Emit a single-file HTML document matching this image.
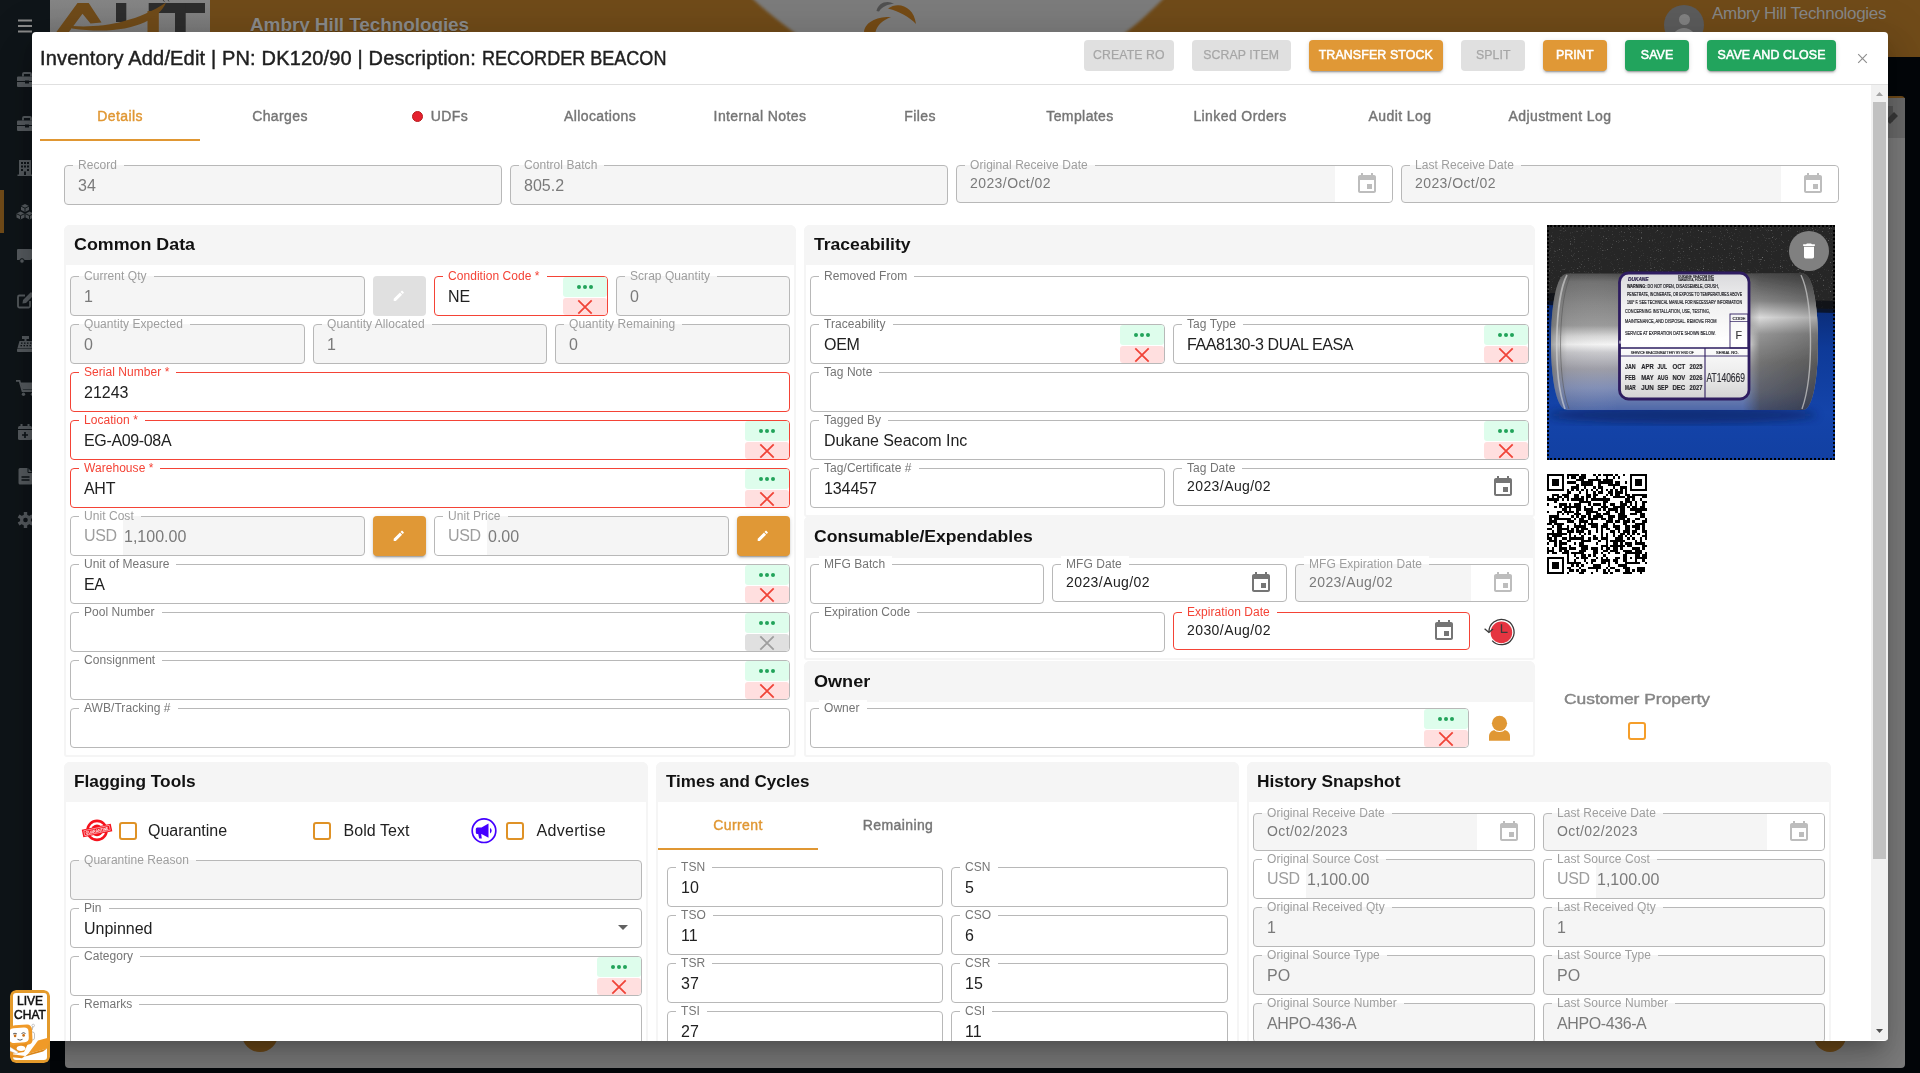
<!DOCTYPE html>
<html lang="en"><head><meta charset="utf-8"><title>Inventory Add/Edit</title>
<style>
*{box-sizing:border-box;margin:0;padding:0}
html,body{width:1920px;height:1073px;overflow:hidden;background:#050709}
body{font-family:"Liberation Sans",sans-serif;position:relative}
.abs{position:absolute}
#bg{position:absolute;left:0;top:0;width:1920px;height:1073px;overflow:hidden;background:#04070a}
#dlg{position:absolute;left:32px;top:32px;width:1856px;height:1008.5px;background:#fff;border-radius:4px;overflow:hidden}
#dlgsh{position:absolute;left:32px;top:32px;width:1856px;height:1008.5px;border-radius:4px;box-shadow:0 11px 15px -7px rgba(0,0,0,.2),0 24px 38px 3px rgba(0,0,0,.14),0 9px 46px 8px rgba(0,0,0,.12)}
#c{position:absolute;left:-32px;top:-32px;width:1920px;height:1073px;will-change:transform}
.title{position:absolute;left:40px;top:46px;font-size:20px;line-height:24px;color:#1f1f1f;font-weight:normal;-webkit-text-stroke:.45px #1f1f1f;letter-spacing:.16px;white-space:nowrap}
.btn{position:absolute;top:40px;height:30.5px;border-radius:4px;font-size:13px;font-weight:normal;-webkit-text-stroke:.55px;line-height:30px;text-align:center;white-space:nowrap;letter-spacing:.1px}
.btn span{display:inline-block;transform:scaleX(.955)}
.btn.o{background:#e09836;color:#fff;box-shadow:0 3px 1px -2px rgba(0,0,0,.2),0 2px 2px 0 rgba(0,0,0,.14),0 1px 5px 0 rgba(0,0,0,.12)}
.btn.g{background:#22a45d;color:#fff;box-shadow:0 3px 1px -2px rgba(0,0,0,.2),0 2px 2px 0 rgba(0,0,0,.14),0 1px 5px 0 rgba(0,0,0,.12)}
.btn.d{background:#e0e0e0;color:#a6a6a6;-webkit-text-stroke:.25px;letter-spacing:.1px}
.btn.d span{transform:scaleX(.945)}
.tab{position:absolute;height:48px;width:160px;text-align:center;font-size:14px;line-height:46px;color:#757575;font-weight:normal;-webkit-text-stroke:.4px;letter-spacing:.4px;white-space:nowrap}
.tab.a{color:#e09733}
.tab.a:after{content:"";position:absolute;left:0;right:0;bottom:0;height:2px;background:#e09733}
.f{position:absolute;border:1px solid #b8b8b8;border-radius:4px;background:#fff}
.f.dis{background:#f5f5f5}
.f.red{border-color:#f44336}
.f .l{position:absolute;left:8px;top:-9px;height:16px;padding:0 7px 0 5px;font-size:12px;line-height:16px;color:#757575;white-space:nowrap;background:#fff;letter-spacing:.05px}
.f.dis .l{color:#9e9e9e;background:linear-gradient(#fff 0,#fff 8px,#f5f5f5 8px)}
.f.dis.inpanel .l{background:linear-gradient(#fff 0,#fff 8px,#f5f5f5 8px)}
.f.red .l{color:#f44336}
.f .v{position:absolute;left:13px;top:8.7px;font-size:16px;line-height:22px;color:#212121;white-space:nowrap}
.f.dis .v{color:#7a7a7a}
.f.date .v{font-size:14px;top:7px;line-height:20px;letter-spacing:.42px}
.f .usd{position:absolute;left:0;top:0;bottom:0;background:#fff;border-radius:4px 0 0 4px;font-size:16px;line-height:38px;padding-left:13px;color:#9e9e9e;letter-spacing:-.4px}
.f .icw{position:absolute;right:0;top:0;bottom:0;background:#fff;border-radius:0 4px 4px 0}
.gb{position:absolute;right:0;top:0;width:44px;height:20px;background:#defdec;border-radius:3px}
.gb i{position:absolute;top:8px;width:4px;height:4px;border-radius:50%;background:#22a35a}
.rb{position:absolute;right:0;top:21px;width:44px;bottom:0;background:#ffdfdf;border-radius:3px 3px 4px 3px;overflow:hidden}
.rb.gray{background:#e0e0e0}
.pan{position:absolute;background:#fff;border:2px solid #f5f5f5;border-radius:6px 6px 3px 3px}
.ph{position:absolute;background:#f5f5f5;border-radius:6px 6px 0 0}
.pt{position:absolute;font-size:16.5px;line-height:20px;font-weight:bold;color:#111;white-space:nowrap;letter-spacing:0;transform-origin:0 50%}
.cb{position:absolute;width:18px;height:18px;border:2px solid #df9226;border-radius:3px;background:#fff}
.cl{position:absolute;font-size:16px;line-height:20px;color:#212121;white-space:nowrap}
.pbtn{position:absolute;width:53px;height:40px;border-radius:4px;background:#e09836;box-shadow:0 3px 1px -2px rgba(0,0,0,.2),0 2px 2px 0 rgba(0,0,0,.14),0 1px 5px 0 rgba(0,0,0,.12)}
.pbtn.d{background:#e0e0e0;box-shadow:none}
.pbtn svg{position:absolute;left:19.4px;top:13.2px}
svg{display:block}
</style></head>
<body>
<div id="bg">
<div class="abs" style="left:50px;top:0;width:1870px;height:57px;background:#704b19"></div>
<svg class="abs" style="left:0;top:0" width="1920" height="56" viewBox="0 0 1920 56">
<defs><filter id="bl"><feGaussianBlur stdDeviation="1.500"/></filter></defs>
<path filter="url(#bl)" d="M750 -4 C 764 10, 780 22, 799 36 L 1121 36 C 1140 22, 1152 10, 1166 -4 Z" fill="#7c7c7c"/>
<path d="M864 32 C 865 22, 877 16.500, 891 17 C 883 20, 877 25, 875.500 32 Z" fill="#754b15"/>
<path d="M888 8.500 C 898 1, 914 6, 916 24 C 909 16.500, 900 12, 888 8.500 Z" fill="#754b15"/>
<path d="M876.500 11 C 878 2.500, 888 -0.500, 894 4 C 888 4, 882 6.500, 879 11.500 Z" fill="#505050"/>
</svg>
<div class="abs" style="left:50px;top:0;width:160px;height:56px;background:linear-gradient(#868686,#787878 60%);overflow:hidden">
<svg width="160" height="56" viewBox="0 0 160 56">
<rect x="66" y="3" width="10.300" height="19" fill="#2d2d2d"/>
<rect x="98.700" y="3" width="56.300" height="10" fill="#2d2d2d"/><rect x="125" y="3" width="10.700" height="30" fill="#2d2d2d"/>
<path d="M6 32.500 L27.500 3 L38.700 3 L51.500 22.500 L40.500 23.500 L32.500 13.700 L18.500 32.500 Z" fill="#704b19"/>
<rect x="97.500" y="11" width="11.300" height="22" fill="#704b19"/>
<path d="M22 26 C 50 28, 85 23, 116 2.500 C 108 22, 75 36, 22 28.500 Z" fill="#704b19"/>
<path d="M113 0 l1.500 1.800 M118 0 l1 1.500" stroke="#333" stroke-width=".8"/>
</svg></div>
<div class="abs" style="left:250px;top:13px;font-size:19px;line-height:24px;color:#8c8c8c;font-weight:bold;letter-spacing:-.1px;white-space:nowrap;text-shadow:0 1px 1px rgba(0,0,0,.25)">Ambry Hill Technologies</div>
<div class="abs" style="left:1712px;top:3px;font-size:17px;line-height:22px;color:#878787;white-space:nowrap;letter-spacing:-.3px">Ambry Hill Technologies</div>
<div class="abs" style="left:1664px;top:5px;width:40px;height:40px;border-radius:50%;background:#5c5c5c;overflow:hidden"><div class="abs" style="left:14.500px;top:9px;width:11px;height:11px;border-radius:50%;background:#828282"></div><div class="abs" style="left:8px;top:23px;width:24px;height:24px;border-radius:50%;background:#828282"></div></div>
<div class="abs" style="left:65px;top:96px;width:1840px;height:972px;background:#7e7e7e;border-radius:4px;border-top:2px solid #704b19"></div>
<div class="abs" style="left:1868px;top:98px;width:37px;height:40px;background:#6c6c6c"></div>
<svg class="abs" style="left:1880px;top:104px" width="22" height="22" viewBox="0 0 22 22"><path d="M8 2 h5 v16 h-5z" fill="#565656"/><path d="M6 16 L14 8 L18 12 L10 20Z" fill="#3a3a3a"/></svg>
<div class="abs" style="left:242px;top:1016px;width:36px;height:36px;border-radius:50%;background:#704b19"></div>
<div class="abs" style="left:1814px;top:1020px;width:32px;height:32px;border-radius:50%;background:#704b19"></div>
<div class="abs" style="left:0;top:0;width:50px;height:1073px;background:#0f1519"></div>
<div class="abs" style="left:0;top:190px;width:4px;height:43px;background:#704b19"></div>
<svg class="abs" style="left:18px;top:19px" width="14" height="14" viewBox="0 0 14 14"><path d="M0 1.600h14M0 7h14M0 12.400h14" stroke="#8a8a8a" stroke-width="2"/></svg>
<svg class="abs" style="left:17px;top:72px;overflow:visible" width="22" height="17" viewBox="0 0 22 17"><path d="M1 4.500 h18 a1 1 0 0 1 1 1 V14 a1 1 0 0 1 -1 1 H1 a1 1 0 0 1 -1 -1 V5.500 a1 1 0 0 1 1 -1z" fill="#575c60"/><path d="M6 4.500 V2 a1 1 0 0 1 1 -1 h6 a1 1 0 0 1 1 1 V4.500" fill="none" stroke="#575c60" stroke-width="1.800"/><path d="M0 9.500 h20" stroke="#0f1519" stroke-width="1"/><rect x="8" y="8.500" width="4" height="3" fill="#0f1519"/></svg>
<svg class="abs" style="left:17px;top:116px;overflow:visible" width="22" height="17" viewBox="0 0 22 17"><path d="M1 4.500 h18 a1 1 0 0 1 1 1 V14 a1 1 0 0 1 -1 1 H1 a1 1 0 0 1 -1 -1 V5.500 a1 1 0 0 1 1 -1z" fill="#575c60"/><path d="M6 4.500 V2 a1 1 0 0 1 1 -1 h6 a1 1 0 0 1 1 1 V4.500" fill="none" stroke="#575c60" stroke-width="1.800"/><path d="M0 9.500 h20" stroke="#0f1519" stroke-width="1"/><rect x="8" y="8.500" width="4" height="3" fill="#0f1519"/></svg>
<svg class="abs" style="left:17px;top:160px;overflow:visible" width="22" height="17" viewBox="0 0 22 17"><rect x="2" y="0" width="12" height="15" fill="#575c60"/><rect x="0.500" y="14.500" width="15" height="1.500" fill="#575c60"/><g fill="#0f1519"><rect x="4" y="2" width="2" height="2"/><rect x="7" y="2" width="2" height="2"/><rect x="10" y="2" width="2" height="2"/><rect x="4" y="5.500" width="2" height="2"/><rect x="7" y="5.500" width="2" height="2"/><rect x="10" y="5.500" width="2" height="2"/><rect x="4" y="9" width="2" height="2"/><rect x="10" y="9" width="2" height="2"/><rect x="7" y="11.500" width="2" height="3.500"/></g></svg>
<svg class="abs" style="left:17px;top:204px;overflow:visible" width="22" height="17" viewBox="0 0 22 17"><path d="M8 0 l4 2 v4 l-4 2 l-4 -2 v-4z M3.500 7.500 l4 2 v4 l-4 2 l-4 -2 v-4z M12.500 7.500 l4 2 v4 l-4 2 l-4 -2 v-4z" fill="#575c60"/><path d="M4 2.200 l4 2 l4 -2 M8 4.200 v3.600 M-.5 9.700 l4 2 l4 -2 M3.500 11.700 v3.600 M8.500 9.700 l4 2 l4 -2 M12.500 11.700 v3.600" stroke="#0f1519" stroke-width=".9" fill="none"/></svg>
<svg class="abs" style="left:17px;top:248px;overflow:visible" width="22" height="17" viewBox="0 0 22 17"><path d="M1 1 h13 a1 1 0 0 1 1 1 V12 H0 V2 a1 1 0 0 1 1 -1z M15 5 h3 l3 3.500 V12 h-6z" fill="#575c60"/><circle cx="5" cy="13" r="2.300" fill="#575c60" stroke="#0f1519" stroke-width="1"/><circle cx="16.500" cy="13" r="2.300" fill="#575c60" stroke="#0f1519" stroke-width="1"/></svg>
<svg class="abs" style="left:17px;top:292px;overflow:visible" width="22" height="17" viewBox="0 0 22 17"><path d="M8 3.500 H2.500 a1.500 1.500 0 0 0 -1.500 1.500 V14 a1.500 1.500 0 0 0 1.500 1.500 H11.500 a1.500 1.500 0 0 0 1.500 -1.500 V9" fill="none" stroke="#575c60" stroke-width="1.800"/><path d="M6 8 L14 0 L17 3 L9 11 L5.500 11.500Z" fill="#575c60"/></svg>
<svg class="abs" style="left:17px;top:336px;overflow:visible" width="22" height="17" viewBox="0 0 22 17"><rect x="5" y="0" width="7" height="3" fill="#575c60"/><rect x="7.500" y="3" width="2" height="2" fill="#575c60"/><path d="M2.500 5 h13 l2 7 h-17z" fill="#575c60"/><rect x="0" y="12.500" width="18" height="3.500" rx=".8" fill="#575c60"/><g fill="#0f1519"><rect x="4" y="6.500" width="1.500" height="1.300"/><rect x="7" y="6.500" width="1.500" height="1.300"/><rect x="10" y="6.500" width="1.500" height="1.300"/><rect x="13" y="6.500" width="1.500" height="1.300"/><rect x="3.500" y="9" width="1.500" height="1.300"/><rect x="6.500" y="9" width="1.500" height="1.300"/><rect x="9.500" y="9" width="1.500" height="1.300"/><rect x="12.500" y="9" width="1.500" height="1.300"/></g></svg>
<svg class="abs" style="left:17px;top:380px;overflow:visible" width="22" height="17" viewBox="0 0 22 17"><path d="M-1 0.800 H2.500 L5.500 11 H17" fill="none" stroke="#575c60" stroke-width="1.800"/><path d="M3.500 2.500 H19 L17.500 9.500 H5.500Z" fill="#575c60"/><circle cx="6.500" cy="14.300" r="1.700" fill="#575c60"/><circle cx="15.500" cy="14.300" r="1.700" fill="#575c60"/></svg>
<svg class="abs" style="left:17px;top:424px;overflow:visible" width="22" height="17" viewBox="0 0 22 17"><rect x="1" y="2" width="14" height="14" rx="1.500" fill="#575c60"/><rect x="3.500" y="0" width="2" height="4" fill="#575c60"/><rect x="10.500" y="0" width="2" height="4" fill="#575c60"/><rect x="1" y="5" width="14" height="1" fill="#0f1519"/><path d="M8 8 v6 M5 11 h6" stroke="#0f1519" stroke-width="1.700"/></svg>
<svg class="abs" style="left:17px;top:468px;overflow:visible" width="22" height="17" viewBox="0 0 22 17"><path d="M3 0 H11 L15.500 4.500 V15 a1.500 1.500 0 0 1 -1.500 1.500 H3 a1.500 1.500 0 0 1 -1.500 -1.500 V1.500 A1.500 1.500 0 0 1 3 0z" fill="#575c60"/><path d="M11 0 V4.500 H15.500" fill="none" stroke="#0f1519" stroke-width="1"/><path d="M4.500 9 h8 M4.500 12 h8" stroke="#0f1519" stroke-width="1.500"/></svg>
<svg class="abs" style="left:17px;top:512px;overflow:visible" width="22" height="17" viewBox="0 0 22 17"><g transform="translate(8.500 8)"><circle r="5.500" fill="#575c60"/><g fill="#575c60"><rect x="-1.700" y="-8" width="3.400" height="16"/><rect x="-1.700" y="-8" width="3.400" height="16" transform="rotate(60)"/><rect x="-1.700" y="-8" width="3.400" height="16" transform="rotate(120)"/></g><circle r="2.300" fill="#0f1519"/></g></svg>
<div class="abs" style="left:10px;top:990px;width:40px;height:73px;border-radius:6px;overflow:hidden;z-index:50">
<div class="abs" style="left:0;top:0;width:40px;height:73px;border-radius:6px;background:#fff;border:3px solid #e39a2b"></div>
<div class="abs" style="left:2px;top:4px;width:36px;text-align:center;font-size:12px;line-height:14px;color:#111;-webkit-text-stroke:.5px #111;letter-spacing:0">LIVE<br>CHAT</div>
<svg class="abs" style="left:-3px;top:33px" width="44" height="40" viewBox="0 0 44 40">
<path d="M25 7 l1 -4" stroke="#bbb" stroke-width="1.200"/><circle cx="26.200" cy="2.500" r="1.300" fill="#fff" stroke="#aaa" stroke-width=".6"/>
<rect x="23" y="9" width="4.500" height="8" rx="2" fill="#fff" stroke="#999" stroke-width=".6"/>
<path d="M3 7 C3 4, 5 2.500, 8 2.300 L20 1.500 C23 1.500, 24.800 3.500, 25 6.500 L25.500 17 C25.500 20, 23.500 21.500, 20.500 21.700 L8 22.500 C5 22.500, 3 20.500, 3 17.500Z" fill="#f09a28"/>
<path d="M2.500 9 C2.500 6.500, 4 5.300, 6.500 5.200 L17 4.500 C20 4.500, 21.500 6, 21.500 8.500 L21.800 15 C21.800 17.500, 20.300 19, 17.800 19.200 L7 20 C4 20, 2.500 18.500, 2.500 16Z" fill="#fff"/>
<path d="M6 11 q2 -1.600 4 0" stroke="#333" stroke-width=".8" fill="none"/><path d="M14.500 10.500 q2 -1.600 4 0" stroke="#333" stroke-width=".8" fill="none"/>
<ellipse cx="8.100" cy="12.800" rx="1.300" ry="1.500" fill="#c9701a"/><ellipse cx="16.600" cy="12.300" rx="1.300" ry="1.500" fill="#c9701a"/>
<path d="M10.500 16.300 q2.500 1.800 5 0" stroke="#444" stroke-width=".9" fill="none"/>
<path d="M3 22.500 L21 20.500 L17 29 L3 31Z" fill="#e88f1e"/>
<ellipse cx="14" cy="25.300" rx="4.300" ry="2.600" fill="#fff"/>
<path d="M21 31 L31 17.500 L44 14 L40 25.500 Z" fill="#f09a28"/><path d="M21 31 L40 25.500 L36 28.500 L18 33.500Z" fill="#d98518"/>
<path d="M21 30 L28.500 17.500 L27 17 L19.500 29Z" fill="#fff"/>
<path d="M3 24 L11 29 L10 31 L3 28Z" fill="#fff" stroke="#bbb" stroke-width=".4"/>
<path d="M3 31 L18 33 L15 35.300 L3 34Z" fill="#e88f1e"/>
</svg>
</div>
</div>
<div id="dlgsh"></div>
<div id="dlg"><div id="c">
<div class="title">Inventory Add/Edit | PN: DK120/90 | Description: <span style="display:inline-block;letter-spacing:0;transform:scaleX(.902);transform-origin:0 50%">RECORDER BEACON</span></div>
<div class="abs" style="left:32px;top:84px;width:1856px;height:1px;background:#e0e0e0"></div>
<div class="btn d" style="left:1084px;width:90px"><span>CREATE RO</span></div>
<div class="btn d" style="left:1192px;width:99px"><span>SCRAP ITEM</span></div>
<div class="btn o" style="left:1309px;width:134px"><span>TRANSFER STOCK</span></div>
<div class="btn d" style="left:1461px;width:64px"><span>SPLIT</span></div>
<div class="btn o" style="left:1543px;width:64px"><span>PRINT</span></div>
<div class="btn g" style="left:1625px;width:64px"><span>SAVE</span></div>
<div class="btn g" style="left:1707px;width:129px"><span>SAVE AND CLOSE</span></div>
<svg class="abs" style="left:1856.500px;top:52.500px" width="11" height="11" viewBox="0 0 11 11"><path d="M1.200 1.200 L9.800 9.800 M9.800 1.200 L1.200 9.800" stroke="#8e8e8e" stroke-width="1.15" fill="none"/></svg>
<div class="abs" style="left:1871px;top:85px;width:17px;height:955px;background:#f1f1f1"></div>
<div class="abs" style="left:1873px;top:102px;width:13px;height:757px;background:#c1c1c1"></div>
<svg class="abs" style="left:1876px;top:92px" width="7" height="4" viewBox="0 0 7 4"><path d="M0 4 L3.5 0 L7 4Z" fill="#a3a3a3"/></svg>
<svg class="abs" style="left:1876px;top:1029px" width="7" height="4" viewBox="0 0 7 4"><path d="M0 0 L3.5 4 L7 0Z" fill="#505050"/></svg>
<div class="tab a" style="left:40px;top:93px">Details</div>
<div class="tab" style="left:200px;top:93px">Charges</div>
<div class="tab" style="left:360px;top:93px"><span style="display:inline-block;width:11px;height:11px;border-radius:50%;background:#e5202e;border:1px solid #b71c1c;vertical-align:-1px;margin-right:8px"></span>UDFs</div>
<div class="tab" style="left:520px;top:93px">Allocations</div>
<div class="tab" style="left:680px;top:93px">Internal Notes</div>
<div class="tab" style="left:840px;top:93px">Files</div>
<div class="tab" style="left:1000px;top:93px">Templates</div>
<div class="tab" style="left:1160px;top:93px">Linked Orders</div>
<div class="tab" style="left:1320px;top:93px">Audit Log</div>
<div class="tab" style="left:1480px;top:93px">Adjustment Log</div>
<div class="f dis" style="left:64px;top:165px;width:438px;height:40px"><span class="l">Record</span><span class="v" style="">34</span></div>
<div class="f dis" style="left:510px;top:165px;width:438px;height:40px"><span class="l">Control Batch</span><span class="v" style="">805.2</span></div>
<div class="f dis date" style="left:956px;top:165px;width:437px;height:38px"><span class="icw" style="width:57px"></span><svg width="24" height="24" viewBox="0 0 24 24" style="position:absolute;right:13px;top:6px"><path fill="#bdbdbd" d="M17 12h-5v5h5v-5zM16 1v2H8V1H6v2H5c-1.11 0-1.99.9-1.99 2L3 19c0 1.1.89 2 2 2h14c1.1 0 2-.9 2-2V5c0-1.1-.9-2-2-2h-1V1h-2zm3 18H5V8h14v11z"/></svg><span class="l">Original Receive Date</span><span class="v" style="">2023/Oct/02</span></div>
<div class="f dis date" style="left:1401px;top:165px;width:438px;height:38px"><span class="icw" style="width:57px"></span><svg width="24" height="24" viewBox="0 0 24 24" style="position:absolute;right:13px;top:6px"><path fill="#bdbdbd" d="M17 12h-5v5h5v-5zM16 1v2H8V1H6v2H5c-1.11 0-1.99.9-1.99 2L3 19c0 1.1.89 2 2 2h14c1.1 0 2-.9 2-2V5c0-1.1-.9-2-2-2h-1V1h-2zm3 18H5V8h14v11z"/></svg><span class="l">Last Receive Date</span><span class="v" style="">2023/Oct/02</span></div>
<div class="pan" style="left:64px;top:225px;width:732px;height:532px"></div>
<div class="ph" style="left:64px;top:225px;width:732px;height:40px"></div>
<div class="pt" style="left:74px;top:234px;transform:scaleX(1.082)">Common Data</div>
<div class="f dis" style="left:70px;top:276px;width:295px;height:40px"><span class="l">Current Qty</span><span class="v" style="">1</span></div>
<div class="pbtn d" style="left:373px;top:276px"><svg width="13.6" height="13.6" viewBox="0 0 24 24" style=""><path fill="#fff" d="M3 17.25V21h3.75L17.81 9.94l-3.75-3.75L3 17.25zM20.71 7.04c.39-.39.39-1.02 0-1.41l-2.34-2.34c-.39-.39-1.02-.39-1.41 0l-1.83 1.83 3.75 3.75 1.83-1.83z"/></svg></div>
<div class="f red" style="left:434px;top:276px;width:174px;height:40px"><span class="l">Condition Code *</span><span class="v" style="">NE</span><span class="gb"><i style="left:14px"></i><i style="left:20px"></i><i style="left:26px"></i></span><span class="rb"><svg width="44" height="18" viewBox="0 0 44 18"><path d="M15.3 2.3 L28.7 15.7 M28.7 2.3 L15.3 15.7" stroke="#f04438" stroke-width="1.8" fill="none"/></svg></span></div>
<div class="f dis" style="left:616px;top:276px;width:174px;height:40px"><span class="l">Scrap Quantity</span><span class="v" style="">0</span></div>
<div class="f dis" style="left:70px;top:324px;width:235px;height:40px"><span class="l">Quantity Expected</span><span class="v" style="">0</span></div>
<div class="f dis" style="left:313px;top:324px;width:234px;height:40px"><span class="l">Quantity Allocated</span><span class="v" style="">1</span></div>
<div class="f dis" style="left:555px;top:324px;width:235px;height:40px"><span class="l">Quantity Remaining</span><span class="v" style="">0</span></div>
<div class="f red" style="left:70px;top:372px;width:720px;height:40px"><span class="l">Serial Number *</span><span class="v" style="">21243</span></div>
<div class="f red" style="left:70px;top:420px;width:720px;height:40px"><span class="l">Location *</span><span class="v" style="letter-spacing:-0.35px;">EG-A09-08A</span><span class="gb"><i style="left:14px"></i><i style="left:20px"></i><i style="left:26px"></i></span><span class="rb"><svg width="44" height="18" viewBox="0 0 44 18"><path d="M15.3 2.3 L28.7 15.7 M28.7 2.3 L15.3 15.7" stroke="#f04438" stroke-width="1.8" fill="none"/></svg></span></div>
<div class="f red" style="left:70px;top:468px;width:720px;height:40px"><span class="l">Warehouse *</span><span class="v" style="letter-spacing:-0.3px;">AHT</span><span class="gb"><i style="left:14px"></i><i style="left:20px"></i><i style="left:26px"></i></span><span class="rb"><svg width="44" height="18" viewBox="0 0 44 18"><path d="M15.3 2.3 L28.7 15.7 M28.7 2.3 L15.3 15.7" stroke="#f04438" stroke-width="1.8" fill="none"/></svg></span></div>
<div class="f dis" style="left:70px;top:516px;width:295px;height:40px"><span class="usd" style="width:52px">USD</span><span class="l" style="background:linear-gradient(#fff,#fff) 0 0/44px 100% no-repeat,linear-gradient(#fff 0,#fff 8px,#f5f5f5 8px)">Unit Cost</span><span class="v" style="left:53px;">1,100.00</span></div>
<div class="pbtn" style="left:373px;top:516px"><svg width="13.6" height="13.6" viewBox="0 0 24 24" style=""><path fill="#fff" d="M3 17.25V21h3.75L17.81 9.94l-3.75-3.75L3 17.25zM20.71 7.04c.39-.39.39-1.02 0-1.41l-2.34-2.34c-.39-.39-1.02-.39-1.41 0l-1.83 1.83 3.75 3.75 1.83-1.83z"/></svg></div>
<div class="f dis" style="left:434px;top:516px;width:295px;height:40px"><span class="usd" style="width:52px">USD</span><span class="l" style="background:linear-gradient(#fff,#fff) 0 0/44px 100% no-repeat,linear-gradient(#fff 0,#fff 8px,#f5f5f5 8px)">Unit Price</span><span class="v" style="left:53px;">0.00</span></div>
<div class="pbtn" style="left:737px;top:516px"><svg width="13.6" height="13.6" viewBox="0 0 24 24" style=""><path fill="#fff" d="M3 17.25V21h3.75L17.81 9.94l-3.75-3.75L3 17.25zM20.71 7.04c.39-.39.39-1.02 0-1.41l-2.34-2.34c-.39-.39-1.02-.39-1.41 0l-1.83 1.83 3.75 3.75 1.83-1.83z"/></svg></div>
<div class="f" style="left:70px;top:564px;width:720px;height:40px"><span class="l">Unit of Measure</span><span class="v" style="letter-spacing:-0.3px;">EA</span><span class="gb"><i style="left:14px"></i><i style="left:20px"></i><i style="left:26px"></i></span><span class="rb"><svg width="44" height="18" viewBox="0 0 44 18"><path d="M15.3 2.3 L28.7 15.7 M28.7 2.3 L15.3 15.7" stroke="#f04438" stroke-width="1.8" fill="none"/></svg></span></div>
<div class="f" style="left:70px;top:612px;width:720px;height:40px"><span class="l">Pool Number</span><span class="gb"><i style="left:14px"></i><i style="left:20px"></i><i style="left:26px"></i></span><span class="rb gray"><svg width="44" height="18" viewBox="0 0 44 18"><path d="M15.3 2.3 L28.7 15.7 M28.7 2.3 L15.3 15.7" stroke="#9e9e9e" stroke-width="1.8" fill="none"/></svg></span></div>
<div class="f" style="left:70px;top:660px;width:720px;height:40px"><span class="l">Consignment</span><span class="gb"><i style="left:14px"></i><i style="left:20px"></i><i style="left:26px"></i></span><span class="rb"><svg width="44" height="18" viewBox="0 0 44 18"><path d="M15.3 2.3 L28.7 15.7 M28.7 2.3 L15.3 15.7" stroke="#f04438" stroke-width="1.8" fill="none"/></svg></span></div>
<div class="f" style="left:70px;top:708px;width:720px;height:40px"><span class="l">AWB/Tracking #</span></div>
<div class="pan" style="left:804px;top:225px;width:731px;height:292px"></div>
<div class="ph" style="left:804px;top:225px;width:731px;height:40px"></div>
<div class="pt" style="left:814px;top:234px;transform:scaleX(1.064)">Traceability</div>
<div class="f" style="left:810px;top:276px;width:719px;height:40px"><span class="l">Removed From</span></div>
<div class="f" style="left:810px;top:324px;width:355px;height:40px"><span class="l">Traceability</span><span class="v" style="letter-spacing:-0.3px;">OEM</span><span class="gb"><i style="left:14px"></i><i style="left:20px"></i><i style="left:26px"></i></span><span class="rb"><svg width="44" height="18" viewBox="0 0 44 18"><path d="M15.3 2.3 L28.7 15.7 M28.7 2.3 L15.3 15.7" stroke="#f04438" stroke-width="1.8" fill="none"/></svg></span></div>
<div class="f" style="left:1173px;top:324px;width:356px;height:40px"><span class="l">Tag Type</span><span class="v" style="letter-spacing:-0.4px;">FAA8130-3 DUAL EASA</span><span class="gb"><i style="left:14px"></i><i style="left:20px"></i><i style="left:26px"></i></span><span class="rb"><svg width="44" height="18" viewBox="0 0 44 18"><path d="M15.3 2.3 L28.7 15.7 M28.7 2.3 L15.3 15.7" stroke="#f04438" stroke-width="1.8" fill="none"/></svg></span></div>
<div class="f" style="left:810px;top:372px;width:719px;height:40px"><span class="l">Tag Note</span></div>
<div class="f" style="left:810px;top:420px;width:719px;height:40px"><span class="l">Tagged By</span><span class="v" style="letter-spacing:-0.05px;">Dukane Seacom Inc</span><span class="gb"><i style="left:14px"></i><i style="left:20px"></i><i style="left:26px"></i></span><span class="rb"><svg width="44" height="18" viewBox="0 0 44 18"><path d="M15.3 2.3 L28.7 15.7 M28.7 2.3 L15.3 15.7" stroke="#f04438" stroke-width="1.8" fill="none"/></svg></span></div>
<div class="f" style="left:810px;top:468px;width:355px;height:40px"><span class="l">Tag/Certificate #</span><span class="v" style="letter-spacing:-0.1px;">134457</span></div>
<div class="f date" style="left:1173px;top:468px;width:356px;height:38px"><svg width="24" height="24" viewBox="0 0 24 24" style="position:absolute;right:13px;top:6px"><path fill="#757575" d="M17 12h-5v5h5v-5zM16 1v2H8V1H6v2H5c-1.11 0-1.99.9-1.99 2L3 19c0 1.1.89 2 2 2h14c1.1 0 2-.9 2-2V5c0-1.1-.9-2-2-2h-1V1h-2zm3 18H5V8h14v11z"/></svg><span class="l">Tag Date</span><span class="v" style="">2023/Aug/02</span></div>
<div class="pan" style="left:804px;top:516px;width:731px;height:144px"></div>
<div class="ph" style="left:804px;top:516px;width:731px;height:42px"></div>
<div class="pt" style="left:814px;top:526px;transform:scaleX(1.065)">Consumable/Expendables</div>
<div class="f" style="left:810px;top:564px;width:234px;height:40px"><span class="l">MFG Batch</span></div>
<div class="f date" style="left:1052px;top:564px;width:235px;height:38px"><svg width="24" height="24" viewBox="0 0 24 24" style="position:absolute;right:13px;top:6px"><path fill="#757575" d="M17 12h-5v5h5v-5zM16 1v2H8V1H6v2H5c-1.11 0-1.99.9-1.99 2L3 19c0 1.1.89 2 2 2h14c1.1 0 2-.9 2-2V5c0-1.1-.9-2-2-2h-1V1h-2zm3 18H5V8h14v11z"/></svg><span class="l">MFG Date</span><span class="v" style="">2023/Aug/02</span></div>
<div class="f dis date" style="left:1295px;top:564px;width:234px;height:38px"><span class="icw" style="width:57px"></span><svg width="24" height="24" viewBox="0 0 24 24" style="position:absolute;right:13px;top:6px"><path fill="#bdbdbd" d="M17 12h-5v5h5v-5zM16 1v2H8V1H6v2H5c-1.11 0-1.99.9-1.99 2L3 19c0 1.1.89 2 2 2h14c1.1 0 2-.9 2-2V5c0-1.1-.9-2-2-2h-1V1h-2zm3 18H5V8h14v11z"/></svg><span class="l">MFG Expiration Date</span><span class="v" style="">2023/Aug/02</span></div>
<div class="f" style="left:810px;top:612px;width:355px;height:40px"><span class="l">Expiration Code</span></div>
<div class="f red date" style="left:1173px;top:612px;width:297px;height:38px"><svg width="24" height="24" viewBox="0 0 24 24" style="position:absolute;right:13px;top:6px"><path fill="#757575" d="M17 12h-5v5h5v-5zM16 1v2H8V1H6v2H5c-1.11 0-1.99.9-1.99 2L3 19c0 1.1.89 2 2 2h14c1.1 0 2-.9 2-2V5c0-1.1-.9-2-2-2h-1V1h-2zm3 18H5V8h14v11z"/></svg><span class="l">Expiration Date</span><span class="v" style="">2030/Aug/02</span></div>
<svg class="abs" style="left:1482px;top:616px" width="36" height="32" viewBox="0 0 36 32">
<circle cx="19.4" cy="16.4" r="10.8" fill="#e53541"/>
<path d="M10.2 24.6 A12.6 12.6 0 1 0 6.9 16.2" fill="none" stroke="#3a3a3a" stroke-width="1.3"/>
<path d="M2.6 12.8 L6.9 16.4 L11 13.1" fill="none" stroke="#3a3a3a" stroke-width="1.3"/>
<path d="M19.5 8.3 V16.4 H25.6" fill="none" stroke="#3a3a3a" stroke-width="1.3"/></svg>
<div class="pan" style="left:804px;top:661px;width:731px;height:96px"></div>
<div class="ph" style="left:804px;top:661px;width:731px;height:41px"></div>
<div class="pt" style="left:814px;top:671px;transform:scaleX(1.095)">Owner</div>
<div class="f" style="left:810px;top:708px;width:659px;height:40px"><span class="l">Owner</span><span class="gb"><i style="left:14px"></i><i style="left:20px"></i><i style="left:26px"></i></span><span class="rb"><svg width="44" height="18" viewBox="0 0 44 18"><path d="M15.3 2.3 L28.7 15.7 M28.7 2.3 L15.3 15.7" stroke="#f04438" stroke-width="1.8" fill="none"/></svg></span></div>
<svg class="abs" style="left:1488px;top:715px" width="23" height="27" viewBox="0 0 23 27"><path d="M1 25.700 V21.500 C1 17.500, 4 15, 7.500 15 L15.500 15 C19 15, 22 17.500, 22 21.500 V25.700 Z" fill="#e09733"/><circle cx="11.500" cy="8.300" r="8.700" fill="#fff"/><circle cx="11.500" cy="8.300" r="7.600" fill="#e09733"/></svg>
<div class="abs" style="left:1547px;top:225px;width:288px;height:235px;background:#111;overflow:hidden">
<svg width="288" height="235" viewBox="0 0 288 235">
<defs>
<linearGradient id="cyl" x1="0" y1="0" x2="0" y2="1"><stop offset="0" stop-color="#4c4c4c"/><stop offset=".06" stop-color="#6e6e6e"/><stop offset=".22" stop-color="#858585"/><stop offset=".38" stop-color="#989898"/><stop offset=".46" stop-color="#d8d8d8"/><stop offset=".52" stop-color="#f4f4f4"/><stop offset=".58" stop-color="#c8c8cc"/><stop offset=".7" stop-color="#9c9ca6"/><stop offset=".84" stop-color="#7f8db6"/><stop offset="1" stop-color="#4f68a8"/></linearGradient>
<linearGradient id="cylr" x1="0" y1="0" x2="0" y2="1"><stop offset="0" stop-color="#3a3a3a"/><stop offset=".1" stop-color="#5a5a5a"/><stop offset=".24" stop-color="#8a8a8a"/><stop offset=".35" stop-color="#e2e2e2"/><stop offset=".46" stop-color="#9a9a9a"/><stop offset=".65" stop-color="#767676"/><stop offset=".85" stop-color="#5e6270"/><stop offset="1" stop-color="#3f4a6a"/></linearGradient>
<linearGradient id="cylh" x1="0" y1="0" x2="1" y2="0"><stop offset="0" stop-color="#555" stop-opacity=".55"/><stop offset=".06" stop-color="#777" stop-opacity=".1"/><stop offset=".25" stop-color="#fff" stop-opacity="0"/><stop offset=".75" stop-color="#000" stop-opacity="0"/><stop offset="1" stop-color="#000" stop-opacity=".25"/></linearGradient>
<linearGradient id="blu" x1="0" y1="0" x2="0" y2="1"><stop offset="0" stop-color="#0a2a72"/><stop offset=".3" stop-color="#0e3a98"/><stop offset=".7" stop-color="#1444aa"/><stop offset="1" stop-color="#1240a2"/></linearGradient>
<linearGradient id="lab" x1="0" y1="0" x2="0" y2="1"><stop offset="0" stop-color="#d9d9dc"/><stop offset=".25" stop-color="#f1f1f1"/><stop offset=".55" stop-color="#ffffff"/><stop offset=".8" stop-color="#ececec"/><stop offset="1" stop-color="#d2d2d2"/></linearGradient>
<filter id="nz" x="0" y="0" width="100%" height="100%"><feTurbulence type="fractalNoise" baseFrequency=".9" numOctaves="2" seed="3" result="n"/><feColorMatrix type="matrix" values="0 0 0 0 .55  0 0 0 0 .55  0 0 0 0 .55  1.5 1.5 1.5 0 -2.62"/></filter>
<linearGradient id="mg" x1="0" y1="0" x2="1" y2="0"><stop offset="0" stop-color="#000"/><stop offset=".2" stop-color="#fff"/><stop offset="1" stop-color="#fff"/></linearGradient><mask id="mk" maskUnits="userSpaceOnUse" x="190" y="30" width="90" height="170"><rect x="196" y="30" width="84" height="170" fill="url(#mg)"/></mask><filter id="sb"><feGaussianBlur stdDeviation=".35"/></filter>
<filter id="sh"><feGaussianBlur stdDeviation="4"/></filter>
</defs>
<rect x="0" y="0" width="288" height="100" fill="#262626"/>
<rect x="0" y="0" width="288" height="95" filter="url(#nz)" opacity=".55"/>
<path d="M0 76 L288 84 L288 235 L0 235Z" fill="url(#blu)"/>
<path d="M0 68 L288 76 L288 88 L0 80Z" fill="#0b0d14" opacity=".75"/>
<ellipse cx="135" cy="190" rx="135" ry="9" fill="#0a1d52" opacity=".55" filter="url(#sh)"/>
<g filter="url(#sb)">
<clipPath id="cc"><path d="M20 48.500 H256 C 266 48.500, 271 82, 271 117 C 271 152, 266 185, 256 185 H20 C 9 185, 4 152, 4 117 C 4 82, 9 48.500, 20 48.500 Z"/></clipPath><path d="M20 48.500 H256 C 266 48.500, 271 82, 271 117 C 271 152, 266 185, 256 185 H20 C 9 185, 4 152, 4 117 C 4 82, 9 48.500, 20 48.500 Z" fill="url(#cyl)"/>
<g clip-path="url(#cc)"><rect x="196" y="40" width="80" height="150" fill="url(#cylr)" mask="url(#mk)"/></g>
<path d="M20 48.500 H256 C 266 48.500, 271 82, 271 117 C 271 152, 266 185, 256 185 H20 C 9 185, 4 152, 4 117 C 4 82, 9 48.500, 20 48.500 Z" fill="url(#cylh)"/>
<path d="M24 50 C12 70, 9 150, 22 184" fill="none" stroke="#555" stroke-width=".8" opacity=".7"/><path d="M20 50 C8 72, 5.500 150, 18 184" fill="none" stroke="#ddd" stroke-width="1.600" opacity=".6"/>
<path d="M254 50 C266 75, 267 150, 255 184" fill="none" stroke="#c8c8c8" stroke-width="1.400" opacity=".75"/>
<rect x="72.500" y="48" width="129.500" height="126" rx="9" fill="url(#lab)" stroke="#2e1d60" stroke-width="2.800"/>
<path d="M72 117 C 110 121, 150 119, 183 112" stroke="#fff" stroke-width="3" opacity=".55" fill="none"/>
<line x1="73" y1="123" x2="202" y2="123" stroke="#2e1d60" stroke-width="1.500"/><line x1="73" y1="131" x2="202" y2="131" stroke="#2e1d60" stroke-width=".9"/>
<line x1="158" y1="123" x2="158" y2="173" stroke="#2e1d60" stroke-width="1.100"/>
<rect x="183" y="89" width="18" height="34" fill="none" stroke="#2e1d60" stroke-width=".9"/><line x1="183" y1="96.500" x2="201" y2="96.500" stroke="#2e1d60" stroke-width=".7"/>
<g font-family="Liberation Sans, sans-serif" fill="#1e1e24" stroke="#1e1e24" stroke-width=".18">
<text x="81" y="55.500" font-size="4.800" font-weight="bold" font-style="italic" fill="#2e1d60">DUKANE</text>
<text x="131" y="52.500" font-size="3" textLength="36" lengthAdjust="spacingAndGlyphs">DUKANE SEACOM INC</text>
<text x="131" y="56" font-size="3" textLength="36" lengthAdjust="spacingAndGlyphs">SARASOTA, FLORIDA USA</text>
<text x="80" y="63" font-size="4.600" textLength="92" lengthAdjust="spacingAndGlyphs"><tspan font-weight="bold">WARNING:</tspan> DO NOT OPEN, DISASSEMBLE, CRUSH,</text>
<text x="80" y="70.500" font-size="4.600" textLength="115" lengthAdjust="spacingAndGlyphs">PENETRATE, INCINERATE, OR EXPOSE TO TEMPERATURES ABOVE</text>
<text x="80" y="79" font-size="4.600" textLength="115" lengthAdjust="spacingAndGlyphs">160° F. SEE TECHNICAL MANUAL FOR NECESSARY INFORMATION</text>
<text x="78" y="87.500" font-size="5.400" textLength="85" lengthAdjust="spacingAndGlyphs">CONCERNING INSTALLATION, USE, TESTING,</text>
<text x="78" y="98" font-size="5.400" textLength="91.500" lengthAdjust="spacingAndGlyphs">MAINTENANCE, AND DISPOSAL. REMOVE FROM</text>
<text x="78" y="109.500" font-size="5.400" textLength="90.500" lengthAdjust="spacingAndGlyphs">SERVICE AT EXPIRATION DATE SHOWN BELOW.</text>
<text x="185.500" y="95" font-size="3.800" textLength="13" lengthAdjust="spacingAndGlyphs">CODE</text><text x="188.500" y="114" font-size="10.500" fill="#444">F</text>
<text x="83.700" y="129.400" font-size="3.800" textLength="63" lengthAdjust="spacingAndGlyphs">SERVICE BEACON/BATTERY BY END OF</text>
<text x="169" y="129.400" font-size="3.800" textLength="22.500" lengthAdjust="spacingAndGlyphs">SERIAL NO.</text>
<g font-size="7.600" font-weight="bold" fill="#2a2a2e"><text x="78" y="144" textLength="10.7" lengthAdjust="spacingAndGlyphs">JAN</text><text x="94.2" y="144" textLength="12.5" lengthAdjust="spacingAndGlyphs">APR</text><text x="110.5" y="144" textLength="9.6" lengthAdjust="spacingAndGlyphs">JUL</text><text x="125.4" y="144" textLength="12.9" lengthAdjust="spacingAndGlyphs">OCT</text><text x="142.6" y="144" textLength="12.9" lengthAdjust="spacingAndGlyphs">2025</text><text x="78" y="154.5" textLength="10.7" lengthAdjust="spacingAndGlyphs">FEB</text><text x="94.2" y="154.5" textLength="12.5" lengthAdjust="spacingAndGlyphs">MAY</text><text x="110.5" y="154.5" textLength="10.8" lengthAdjust="spacingAndGlyphs">AUG</text><text x="125.4" y="154.5" textLength="12.9" lengthAdjust="spacingAndGlyphs">NOV</text><text x="142.6" y="154.5" textLength="12.9" lengthAdjust="spacingAndGlyphs">2026</text><text x="78" y="164.5" textLength="10.7" lengthAdjust="spacingAndGlyphs">MAR</text><text x="94.2" y="164.5" textLength="12.5" lengthAdjust="spacingAndGlyphs">JUN</text><text x="110.5" y="164.5" textLength="10.8" lengthAdjust="spacingAndGlyphs">SEP</text><text x="125.4" y="164.5" textLength="12.9" lengthAdjust="spacingAndGlyphs">DEC</text><text x="142.6" y="164.5" textLength="12.9" lengthAdjust="spacingAndGlyphs">2027</text></g>
<text x="159.500" y="157.400" font-size="13.500" textLength="38.500" lengthAdjust="spacingAndGlyphs" fill="#33333a">AT140669</text>
</g>
</g>
</svg>
<div class="abs" style="left:0;top:0;width:288px;height:235px;border:2px dotted #000"></div>
<div class="abs" style="left:242px;top:6px;width:40px;height:40px;border-radius:50%;background:#808080"></div>
<svg class="abs" style="left:252px;top:16px" width="20" height="20" viewBox="0 0 24 24"><path fill="#fff" d="M6 19c0 1.100.9 2 2 2h8c1.100 0 2-.9 2-2V7H6v12zM19 4h-3.500l-1-1h-5l-1 1H5v2h14V4z"/></svg>
</div>
<svg class="abs" style="left:1547px;top:474px" width="100" height="100" viewBox="0 0 41 41" shape-rendering="crispEdges"><rect width="41" height="41" fill="#fff"/><path d="M0 0h7v1h-7zM8 0h5v1h-5zM14 0h2v1h-2zM19 0h1v1h-1zM21 0h1v1h-1zM23 0h4v1h-4zM28 0h1v1h-1zM31 0h1v1h-1zM34 0h7v1h-7zM0 1h1v1h-1zM6 1h1v1h-1zM8 1h1v1h-1zM10 1h2v1h-2zM13 1h3v1h-3zM20 1h1v1h-1zM24 1h1v1h-1zM27 1h1v1h-1zM29 1h1v1h-1zM34 1h1v1h-1zM40 1h1v1h-1zM0 2h1v1h-1zM2 2h3v1h-3zM6 2h1v1h-1zM12 2h3v1h-3zM17 2h5v1h-5zM23 2h4v1h-4zM34 2h1v1h-1zM36 2h3v1h-3zM40 2h1v1h-1zM0 3h1v1h-1zM2 3h3v1h-3zM6 3h1v1h-1zM8 3h4v1h-4zM14 3h5v1h-5zM21 3h6v1h-6zM28 3h2v1h-2zM32 3h1v1h-1zM34 3h1v1h-1zM36 3h3v1h-3zM40 3h1v1h-1zM0 4h1v1h-1zM2 4h3v1h-3zM6 4h1v1h-1zM12 4h1v1h-1zM14 4h5v1h-5zM21 4h1v1h-1zM25 4h5v1h-5zM34 4h1v1h-1zM36 4h3v1h-3zM40 4h1v1h-1zM0 5h1v1h-1zM6 5h1v1h-1zM10 5h3v1h-3zM15 5h1v1h-1zM19 5h1v1h-1zM21 5h2v1h-2zM27 5h1v1h-1zM30 5h3v1h-3zM34 5h1v1h-1zM40 5h1v1h-1zM0 6h7v1h-7zM8 6h1v1h-1zM10 6h1v1h-1zM12 6h1v1h-1zM14 6h1v1h-1zM16 6h1v1h-1zM18 6h1v1h-1zM20 6h1v1h-1zM22 6h1v1h-1zM24 6h1v1h-1zM26 6h1v1h-1zM28 6h1v1h-1zM30 6h1v1h-1zM32 6h1v1h-1zM34 6h7v1h-7zM8 7h2v1h-2zM13 7h1v1h-1zM16 7h1v1h-1zM19 7h1v1h-1zM21 7h2v1h-2zM25 7h2v1h-2zM28 7h3v1h-3zM32 7h1v1h-1zM2 8h3v1h-3zM6 8h3v1h-3zM11 8h2v1h-2zM16 8h2v1h-2zM19 8h2v1h-2zM24 8h1v1h-1zM26 8h1v1h-1zM28 8h2v1h-2zM32 8h2v1h-2zM35 8h6v1h-6zM0 9h1v1h-1zM2 9h1v1h-1zM4 9h2v1h-2zM7 9h2v1h-2zM11 9h2v1h-2zM14 9h1v1h-1zM16 9h2v1h-2zM19 9h1v1h-1zM23 9h1v1h-1zM27 9h5v1h-5zM33 9h3v1h-3zM39 9h2v1h-2zM0 10h5v1h-5zM6 10h1v1h-1zM8 10h1v1h-1zM10 10h5v1h-5zM16 10h1v1h-1zM18 10h8v1h-8zM32 10h2v1h-2zM35 10h1v1h-1zM38 10h1v1h-1zM3 11h1v1h-1zM13 11h5v1h-5zM23 11h2v1h-2zM30 11h1v1h-1zM32 11h3v1h-3zM36 11h1v1h-1zM39 11h2v1h-2zM0 12h1v1h-1zM5 12h3v1h-3zM9 12h1v1h-1zM11 12h3v1h-3zM17 12h1v1h-1zM19 12h3v1h-3zM23 12h1v1h-1zM26 12h2v1h-2zM30 12h3v1h-3zM34 12h1v1h-1zM36 12h1v1h-1zM39 12h1v1h-1zM3 13h1v1h-1zM5 13h1v1h-1zM7 13h7v1h-7zM15 13h1v1h-1zM18 13h1v1h-1zM22 13h3v1h-3zM27 13h5v1h-5zM33 13h1v1h-1zM35 13h2v1h-2zM38 13h2v1h-2zM6 14h2v1h-2zM9 14h1v1h-1zM12 14h2v1h-2zM15 14h4v1h-4zM21 14h1v1h-1zM23 14h1v1h-1zM25 14h4v1h-4zM30 14h2v1h-2zM34 14h7v1h-7zM0 15h1v1h-1zM4 15h2v1h-2zM7 15h4v1h-4zM12 15h1v1h-1zM16 15h5v1h-5zM24 15h2v1h-2zM28 15h1v1h-1zM30 15h2v1h-2zM36 15h3v1h-3zM4 16h1v1h-1zM6 16h1v1h-1zM8 16h1v1h-1zM11 16h3v1h-3zM16 16h2v1h-2zM20 16h2v1h-2zM23 16h3v1h-3zM29 16h3v1h-3zM34 16h3v1h-3zM38 16h2v1h-2zM1 17h4v1h-4zM10 17h1v1h-1zM12 17h1v1h-1zM14 17h2v1h-2zM17 17h1v1h-1zM19 17h4v1h-4zM25 17h3v1h-3zM29 17h4v1h-4zM38 17h2v1h-2zM1 18h1v1h-1zM3 18h7v1h-7zM11 18h1v1h-1zM13 18h2v1h-2zM17 18h4v1h-4zM22 18h2v1h-2zM25 18h2v1h-2zM29 18h3v1h-3zM33 18h1v1h-1zM36 18h2v1h-2zM40 18h1v1h-1zM1 19h3v1h-3zM8 19h3v1h-3zM13 19h4v1h-4zM18 19h1v1h-1zM24 19h3v1h-3zM28 19h2v1h-2zM31 19h3v1h-3zM35 19h1v1h-1zM39 19h2v1h-2zM0 20h2v1h-2zM3 20h4v1h-4zM11 20h1v1h-1zM13 20h1v1h-1zM15 20h1v1h-1zM17 20h4v1h-4zM23 20h2v1h-2zM27 20h1v1h-1zM31 20h2v1h-2zM36 20h4v1h-4zM2 21h1v1h-1zM4 21h2v1h-2zM8 21h1v1h-1zM11 21h5v1h-5zM18 21h3v1h-3zM22 21h3v1h-3zM27 21h3v1h-3zM32 21h2v1h-2zM35 21h3v1h-3zM39 21h1v1h-1zM0 22h2v1h-2zM4 22h5v1h-5zM10 22h1v1h-1zM12 22h1v1h-1zM14 22h3v1h-3zM20 22h1v1h-1zM22 22h1v1h-1zM24 22h2v1h-2zM28 22h2v1h-2zM32 22h2v1h-2zM36 22h2v1h-2zM39 22h1v1h-1zM2 23h1v1h-1zM4 23h2v1h-2zM8 23h3v1h-3zM12 23h3v1h-3zM17 23h1v1h-1zM20 23h1v1h-1zM22 23h1v1h-1zM26 23h2v1h-2zM29 23h1v1h-1zM31 23h3v1h-3zM35 23h2v1h-2zM39 23h2v1h-2zM0 24h8v1h-8zM9 24h1v1h-1zM13 24h1v1h-1zM15 24h1v1h-1zM17 24h1v1h-1zM22 24h1v1h-1zM24 24h1v1h-1zM27 24h1v1h-1zM30 24h2v1h-2zM33 24h1v1h-1zM35 24h1v1h-1zM37 24h1v1h-1zM40 24h1v1h-1zM0 25h1v1h-1zM2 25h4v1h-4zM9 25h1v1h-1zM11 25h1v1h-1zM14 25h1v1h-1zM19 25h1v1h-1zM22 25h1v1h-1zM24 25h1v1h-1zM27 25h1v1h-1zM29 25h2v1h-2zM32 25h1v1h-1zM34 25h1v1h-1zM39 25h2v1h-2zM0 26h2v1h-2zM3 26h1v1h-1zM6 26h2v1h-2zM9 26h6v1h-6zM17 26h1v1h-1zM19 26h2v1h-2zM22 26h3v1h-3zM28 26h3v1h-3zM33 26h1v1h-1zM35 26h1v1h-1zM38 26h1v1h-1zM40 26h1v1h-1zM1 27h3v1h-3zM5 27h1v1h-1zM8 27h2v1h-2zM14 27h4v1h-4zM21 27h1v1h-1zM24 27h1v1h-1zM26 27h6v1h-6zM36 27h1v1h-1zM38 27h1v1h-1zM0 28h1v1h-1zM3 28h1v1h-1zM5 28h3v1h-3zM11 28h1v1h-1zM13 28h2v1h-2zM20 28h1v1h-1zM24 28h1v1h-1zM27 28h2v1h-2zM30 28h1v1h-1zM32 28h3v1h-3zM36 28h4v1h-4zM3 29h1v1h-1zM5 29h1v1h-1zM9 29h1v1h-1zM13 29h4v1h-4zM22 29h3v1h-3zM26 29h6v1h-6zM33 29h2v1h-2zM39 29h2v1h-2zM0 30h1v1h-1zM2 30h1v1h-1zM5 30h3v1h-3zM9 30h3v1h-3zM14 30h3v1h-3zM18 30h3v1h-3zM22 30h1v1h-1zM24 30h2v1h-2zM27 30h2v1h-2zM30 30h1v1h-1zM35 30h3v1h-3zM39 30h1v1h-1zM0 31h3v1h-3zM5 31h1v1h-1zM7 31h2v1h-2zM13 31h3v1h-3zM19 31h2v1h-2zM23 31h2v1h-2zM26 31h3v1h-3zM31 31h4v1h-4zM36 31h3v1h-3zM0 32h1v1h-1zM2 32h2v1h-2zM6 32h3v1h-3zM10 32h5v1h-5zM19 32h2v1h-2zM22 32h1v1h-1zM25 32h1v1h-1zM28 32h2v1h-2zM32 32h7v1h-7zM40 32h1v1h-1zM8 33h1v1h-1zM11 33h1v1h-1zM14 33h2v1h-2zM17 33h1v1h-1zM19 33h1v1h-1zM23 33h1v1h-1zM31 33h2v1h-2zM36 33h2v1h-2zM39 33h2v1h-2zM0 34h7v1h-7zM8 34h1v1h-1zM12 34h1v1h-1zM14 34h3v1h-3zM20 34h1v1h-1zM22 34h1v1h-1zM24 34h1v1h-1zM28 34h2v1h-2zM31 34h2v1h-2zM34 34h1v1h-1zM36 34h5v1h-5zM0 35h1v1h-1zM6 35h1v1h-1zM8 35h1v1h-1zM11 35h1v1h-1zM15 35h1v1h-1zM18 35h2v1h-2zM22 35h4v1h-4zM27 35h2v1h-2zM31 35h2v1h-2zM36 35h1v1h-1zM39 35h1v1h-1zM0 36h1v1h-1zM2 36h3v1h-3zM6 36h1v1h-1zM8 36h6v1h-6zM16 36h1v1h-1zM18 36h1v1h-1zM22 36h2v1h-2zM25 36h1v1h-1zM28 36h1v1h-1zM32 36h6v1h-6zM40 36h1v1h-1zM0 37h1v1h-1zM2 37h3v1h-3zM6 37h1v1h-1zM10 37h1v1h-1zM12 37h1v1h-1zM14 37h1v1h-1zM19 37h3v1h-3zM25 37h1v1h-1zM29 37h4v1h-4zM0 38h1v1h-1zM2 38h3v1h-3zM6 38h1v1h-1zM8 38h2v1h-2zM13 38h1v1h-1zM17 38h5v1h-5zM24 38h1v1h-1zM26 38h2v1h-2zM31 38h3v1h-3zM37 38h3v1h-3zM0 39h1v1h-1zM6 39h1v1h-1zM9 39h2v1h-2zM12 39h1v1h-1zM14 39h2v1h-2zM20 39h1v1h-1zM23 39h1v1h-1zM25 39h1v1h-1zM28 39h2v1h-2zM32 39h2v1h-2zM35 39h1v1h-1zM37 39h3v1h-3zM0 40h7v1h-7zM8 40h1v1h-1zM13 40h2v1h-2zM18 40h1v1h-1zM23 40h2v1h-2zM26 40h1v1h-1zM31 40h4v1h-4zM38 40h1v1h-1z" fill="#000"/></svg>
<div class="abs" style="left:1537px;top:688.6px;width:200px;text-align:center;font-size:14.5px;line-height:20px;color:#858585;-webkit-text-stroke:.4px #858585;white-space:nowrap;transform:scaleX(1.2)">Customer Property</div>
<div class="cb" style="left:1628px;top:722px;border-color:#f59e2a"></div>
<div class="pan" style="left:64px;top:762px;width:583.67px;height:300px"></div>
<div class="ph" style="left:64px;top:762px;width:583.67px;height:40px"></div>
<div class="pt" style="left:74px;top:771px;transform:scaleX(1.048)">Flagging Tools</div>
<svg class="abs" style="left:81px;top:818px" width="32" height="25" viewBox="0 0 32 25">
<circle cx="16" cy="12.4" r="9.5" fill="none" stroke="#f5121d" stroke-width="2.6"/>
<circle cx="16" cy="12.4" r="5.8" fill="#f5121d"/>
<g transform="rotate(-12 16 12.4)"><rect x="1.200" y="8.700" width="29.600" height="7.600" fill="#f5121d"/><rect x="3" y="10" width="26" height="5" fill="none" stroke="#fff" stroke-width=".5"/>
<text x="16" y="14.200" font-size="4.300" font-weight="bold" fill="#fff" text-anchor="middle" font-family="Liberation Sans, sans-serif" textLength="23" lengthAdjust="spacingAndGlyphs">QUARANTINE</text></g></svg>
<div class="cb" style="left:119px;top:822px"></div>
<div class="cl" style="left:148px;top:821px">Quarantine</div>
<div class="cb" style="left:313px;top:822px"></div>
<div class="cl" style="left:343.5px;top:821px;letter-spacing:.05px">Bold Text</div>
<svg class="abs" style="left:471px;top:817px" width="26" height="27" viewBox="0 0 26 27">
<circle cx="13" cy="13.700" r="11.800" fill="#fff" stroke="#4400ff" stroke-width="1.700"/>
<path d="M4.800 12 a1.500 1.500 0 0 1 1.500 -1.500 H10.500 L17.500 6.600 V20.800 L10.500 16.900 H10.200 L10.800 21.500 H8.200 L7.200 16.900 H6.300 a1.500 1.500 0 0 1 -1.500 -1.500 Z" fill="#4400ff"/>
<path d="M19 11 a3 3 0 0 1 0 5.400 Z" fill="#4400ff"/></svg>
<div class="cb" style="left:506px;top:822px"></div>
<div class="cl" style="left:536.5px;top:821px;letter-spacing:.3px">Advertise</div>
<div class="f dis" style="left:70px;top:860px;width:572px;height:40px"><span class="l">Quarantine Reason</span></div>
<div class="f" style="left:70px;top:908px;width:572px;height:40px"><span class="l">Pin</span><span class="v" style="">Unpinned</span><svg style="position:absolute;right:13px;top:16px" width="10" height="5" viewBox="0 0 10 5"><path d="M0 0 L5 5 L10 0Z" fill="#616161"/></svg></div>
<div class="f" style="left:70px;top:956px;width:572px;height:40px"><span class="l">Category</span><span class="gb"><i style="left:14px"></i><i style="left:20px"></i><i style="left:26px"></i></span><span class="rb"><svg width="44" height="18" viewBox="0 0 44 18"><path d="M15.3 2.3 L28.7 15.7 M28.7 2.3 L15.3 15.7" stroke="#f04438" stroke-width="1.8" fill="none"/></svg></span></div>
<div class="f" style="left:70px;top:1004px;width:572px;height:60px"><span class="l">Remarks</span></div>
<div class="pan" style="left:655.67px;top:762px;width:583.67px;height:300px"></div>
<div class="ph" style="left:655.67px;top:762px;width:583.67px;height:40px"></div>
<div class="pt" style="left:665.67px;top:771px;transform:scaleX(1.031)">Times and Cycles</div>
<div class="tab a" style="left:658px;top:802px;line-height:47px">Current</div>
<div class="tab" style="left:818px;top:802px;line-height:47px">Remaining</div>
<div class="f" style="left:667px;top:867px;width:276px;height:40px"><span class="l">TSN</span><span class="v" style="">10</span></div>
<div class="f" style="left:951px;top:867px;width:277px;height:40px"><span class="l">CSN</span><span class="v" style="">5</span></div>
<div class="f" style="left:667px;top:915px;width:276px;height:40px"><span class="l">TSO</span><span class="v" style="">11</span></div>
<div class="f" style="left:951px;top:915px;width:277px;height:40px"><span class="l">CSO</span><span class="v" style="">6</span></div>
<div class="f" style="left:667px;top:963px;width:276px;height:40px"><span class="l">TSR</span><span class="v" style="">37</span></div>
<div class="f" style="left:951px;top:963px;width:277px;height:40px"><span class="l">CSR</span><span class="v" style="">15</span></div>
<div class="f" style="left:667px;top:1011px;width:276px;height:40px"><span class="l">TSI</span><span class="v" style="">27</span></div>
<div class="f" style="left:951px;top:1011px;width:277px;height:40px"><span class="l">CSI</span><span class="v" style="">11</span></div>
<div class="pan" style="left:1247.33px;top:762px;width:583.67px;height:300px"></div>
<div class="ph" style="left:1247.33px;top:762px;width:583.67px;height:40px"></div>
<div class="pt" style="left:1257.33px;top:771px;transform:scaleX(1.050)">History Snapshot</div>
<div class="f dis date" style="left:1253px;top:813px;width:282px;height:38px"><span class="icw" style="width:57px"></span><svg width="24" height="24" viewBox="0 0 24 24" style="position:absolute;right:13px;top:6px"><path fill="#bdbdbd" d="M17 12h-5v5h5v-5zM16 1v2H8V1H6v2H5c-1.11 0-1.99.9-1.99 2L3 19c0 1.1.89 2 2 2h14c1.1 0 2-.9 2-2V5c0-1.1-.9-2-2-2h-1V1h-2zm3 18H5V8h14v11z"/></svg><span class="l">Original Receive Date</span><span class="v" style="">Oct/02/2023</span></div>
<div class="f dis date" style="left:1543px;top:813px;width:282px;height:38px"><span class="icw" style="width:57px"></span><svg width="24" height="24" viewBox="0 0 24 24" style="position:absolute;right:13px;top:6px"><path fill="#bdbdbd" d="M17 12h-5v5h5v-5zM16 1v2H8V1H6v2H5c-1.11 0-1.99.9-1.99 2L3 19c0 1.1.89 2 2 2h14c1.1 0 2-.9 2-2V5c0-1.1-.9-2-2-2h-1V1h-2zm3 18H5V8h14v11z"/></svg><span class="l">Last Receive Date</span><span class="v" style="">Oct/02/2023</span></div>
<div class="f dis" style="left:1253px;top:859px;width:282px;height:40px"><span class="usd" style="width:52px">USD</span><span class="l" style="background:linear-gradient(#fff,#fff) 0 0/44px 100% no-repeat,linear-gradient(#fff 0,#fff 8px,#f5f5f5 8px)">Original Source Cost</span><span class="v" style="left:53px;">1,100.00</span></div>
<div class="f dis" style="left:1543px;top:859px;width:282px;height:40px"><span class="usd" style="width:52px">USD</span><span class="l" style="background:linear-gradient(#fff,#fff) 0 0/44px 100% no-repeat,linear-gradient(#fff 0,#fff 8px,#f5f5f5 8px)">Last Source Cost</span><span class="v" style="left:53px;">1,100.00</span></div>
<div class="f dis" style="left:1253px;top:907px;width:282px;height:40px"><span class="l">Original Received Qty</span><span class="v" style="">1</span></div>
<div class="f dis" style="left:1543px;top:907px;width:282px;height:40px"><span class="l">Last Received Qty</span><span class="v" style="">1</span></div>
<div class="f dis" style="left:1253px;top:955px;width:282px;height:40px"><span class="l">Original Source Type</span><span class="v" style="">PO</span></div>
<div class="f dis" style="left:1543px;top:955px;width:282px;height:40px"><span class="l">Last Source Type</span><span class="v" style="">PO</span></div>
<div class="f dis" style="left:1253px;top:1003px;width:282px;height:40px"><span class="l">Original Source Number</span><span class="v" style="letter-spacing:-0.4px;">AHPO-436-A</span></div>
<div class="f dis" style="left:1543px;top:1003px;width:282px;height:40px"><span class="l">Last Source Number</span><span class="v" style="letter-spacing:-0.4px;">AHPO-436-A</span></div>
</div></div>
</body></html>
